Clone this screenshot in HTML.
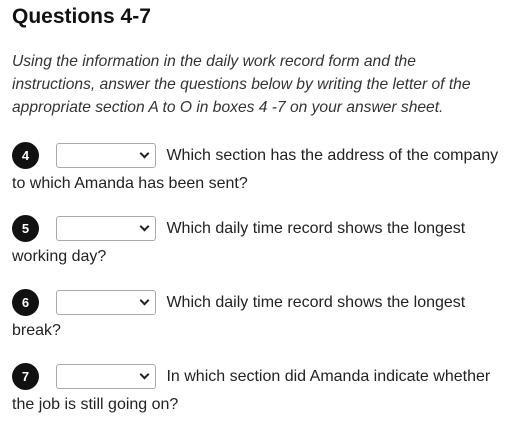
<!DOCTYPE html>
<html><head><style>
body{margin:0;background:#fff;font-family:"Liberation Sans",sans-serif;color:#222;width:514px;height:430px;overflow:hidden;position:relative}
h1{position:absolute;left:12px;top:5px;margin:0;font-size:21px;font-weight:bold;color:#111}
.p{position:absolute;left:12px;top:50px;width:492px;font-size:15.6px;line-height:23px;font-style:italic;color:#333}
.q{position:absolute;left:12px;width:500px;font-size:16px;line-height:28px;color:#222;white-space:nowrap}
.n{display:inline-block;width:27px;height:27px;border-radius:50%;background:#111;color:#fff;font-weight:bold;font-size:13px;text-align:center;line-height:27px;vertical-align:middle}
.s{display:inline-block;width:100px;height:25px;border:1px solid #aaa;border-radius:3px;margin:0 6px 0 17px;vertical-align:middle;position:relative;box-sizing:border-box;background:#fff}
.s:after{content:"";position:absolute;right:7px;top:6px;width:5px;height:5px;border-right:2px solid #222;border-bottom:2px solid #222;transform:rotate(45deg)}
</style></head><body>
<h1>Questions 4-7</h1>
<div class="p">Using the information in the daily work record form and the<br>instructions, answer the questions below by writing the letter of the<br>appropriate section A to O in boxes 4 -7 on your answer sheet.</div>
<div class="q" style="top:142px"><span class="n">4</span><span class="s"></span> Which section has the address of the company<br>to which Amanda has been sent?</div>
<div class="q" style="top:215px"><span class="n">5</span><span class="s"></span> Which daily time record shows the longest<br>working day?</div>
<div class="q" style="top:289px"><span class="n">6</span><span class="s"></span> Which daily time record shows the longest<br>break?</div>
<div class="q" style="top:363px"><span class="n">7</span><span class="s"></span> In which section did Amanda indicate whether<br>the job is still going on?</div>
</body></html>
